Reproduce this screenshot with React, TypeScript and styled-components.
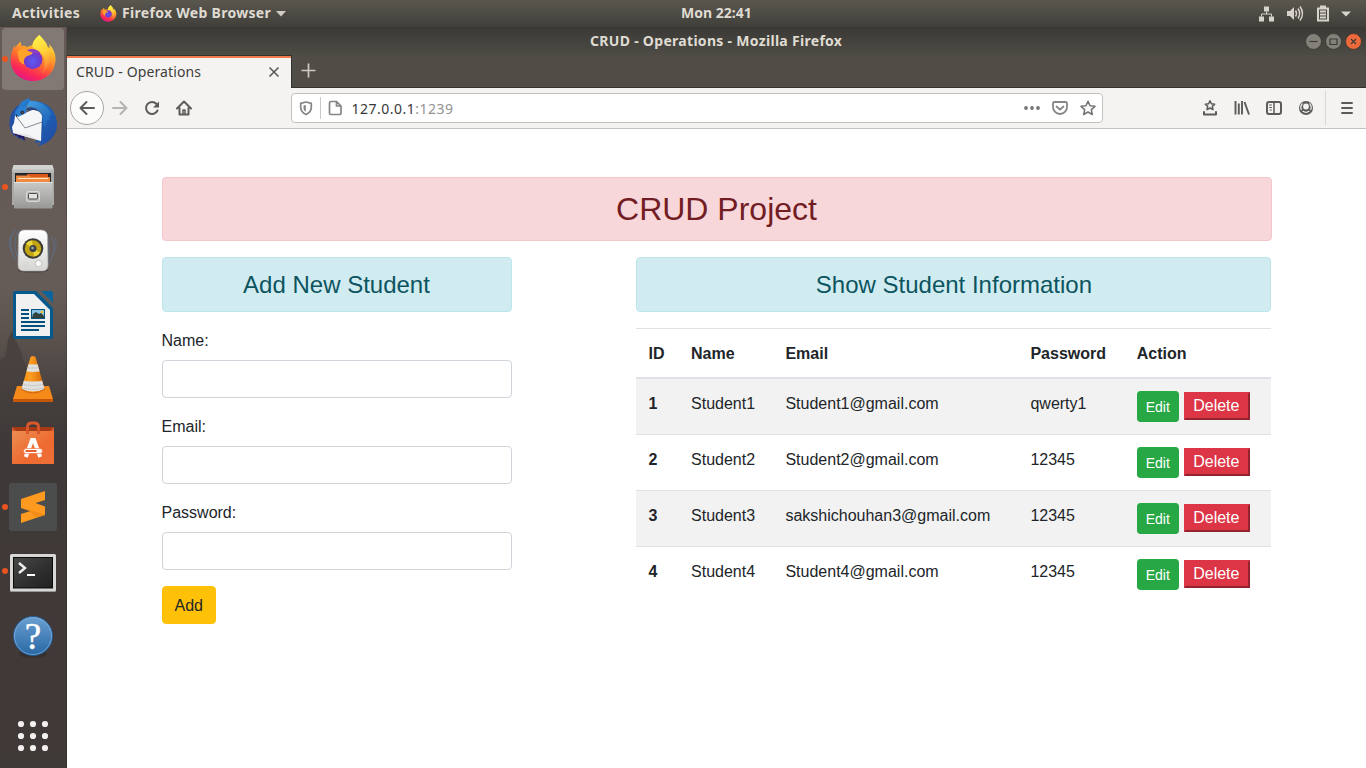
import React from "react";
import styled, { createGlobalStyle, css } from "styled-components";

const UI_FONT = '"Noto Sans", "Open Sans", sans-serif';

const GlobalStyle = createGlobalStyle`
  *, *::before, *::after { box-sizing: border-box; }
  html, body { margin: 0; padding: 0; overflow: hidden; background: #fff; }
  body { font-family: "Liberation Sans", Arial, sans-serif; font-size: 16px; line-height: 1.5; color: #212529; }
  svg { display: block; }
`;

const Desktop = styled.div`
  width: 1366px;
  height: 768px;
  display: flex;
  flex-direction: column;
  overflow: hidden;
`;

/* ---------- system panel ---------- */

const Panel = styled.header`
  height: 27px;
  flex: none;
  display: grid;
  grid-template-columns: 669px 72px 1fr;
  align-items: center;
  padding: 0 14px 0 12px;
  background: linear-gradient(#5a574f, #403f3a);
  color: #dfdbd2;
  font: 700 14px/25px ${UI_FONT};
  white-space: nowrap;
`;

const PanelGroup = styled.div<{ $end?: boolean }>`
  display: flex;
  align-items: center;
  justify-content: ${(p) => (p.$end ? "flex-end" : "flex-start")};
`;

const PanelText = styled.span<{ $w: number; $ls?: number }>`
  width: ${(p) => p.$w}px;
  height: 27px;
  letter-spacing: ${(p) => p.$ls ?? 0}px;
`;

const FoxSlot = styled.span`
  margin: 0 5px 0 19px;
`;

/* ---------- dock ---------- */

const Workspace = styled.div`
  flex: 1;
  display: flex;
  min-height: 0;
`;

const Dock = styled.nav`
  width: 67px;
  flex: none;
  display: flex;
  flex-direction: column;
  position: relative;
  background: linear-gradient(#655a55 0, #665c57 260px, #5b524e 310px, #46403e 370px, #3e3938 420px, #403937 600px, #3f3937 100%);
  border-right: 1px solid rgba(40, 34, 32, 0.25);
`;

const Scenery = styled.svg`
  position: absolute;
  left: 0;
  top: 0;
`;

const DockItem = styled.div<{ $active?: boolean; $running?: boolean }>`
  position: relative;
  height: 64px;
  flex: none;
  ${(p) =>
    p.$active &&
    css`
      &::before {
        content: "";
        position: absolute;
        left: 2px;
        top: 1px;
        width: 62px;
        height: 62px;
        border-radius: 4px;
        background: rgba(255, 255, 255, 0.19);
      }
    `}
  ${(p) =>
    p.$running &&
    css`
      &::after {
        content: "";
        position: absolute;
        left: 2px;
        top: 29px;
        width: 6px;
        height: 6px;
        border-radius: 50%;
        background: #e95420;
      }
    `}
  svg { position: relative; }
`;

const DockEnd = styled.div`
  margin-top: auto;
  height: 64px;
  position: relative;
`;

/* ---------- browser window ---------- */

const Window = styled.main`
  flex: 1;
  display: flex;
  flex-direction: column;
  min-width: 0;
`;

const TitleBar = styled.div`
  height: 28px;
  display: grid;
  grid-template-columns: 523px 254px 1fr;
  align-items: center;
  padding: 0 4px 0 0;
  background: linear-gradient(#3a3935, #4e4b45);
  color: #dfdbd2;
  font: 700 14px/28px ${UI_FONT};
  white-space: nowrap;
`;

const WindowTitle = styled.span`
  grid-column: 2;
  letter-spacing: 0.3px;
`;

const WindowButtons = styled.div`
  display: flex;
  justify-content: flex-end;
  gap: 3px;
`;

const TabStrip = styled.div`
  height: 33px;
  display: flex;
  background: #504d46;
  border-bottom: 1px solid #33322e;
`;

const Tab = styled.div`
  width: 225px;
  height: 33px;
  flex: none;
  display: flex;
  align-items: center;
  justify-content: space-between;
  padding: 0 11px 0 9px;
  border-top: 1px solid #33322e;
  border-right: 1px solid #33322e;
  background: #f4f3f2;
  box-shadow: inset 0 2px #f37b4c;
  color: #3e3e3c;
  font: 400 14px/32px ${UI_FONT};
  letter-spacing: 0.12px;
`;

const NewTab = styled.div`
  padding: 8px 0 0 9px;
`;

const NavBar = styled.div`
  height: 41px;
  display: flex;
  align-items: center;
  background: #f4f3f2;
  border-bottom: 1px solid #c6c2be;
  padding: 0 11px 0 3px;
`;

const BackButton = styled.div`
  width: 34px;
  height: 34px;
  border: 1px solid #aaa7a3;
  border-radius: 50%;
  background: #fcfcfb;
  padding: 8px;
`;

const NavIcons = styled.div`
  display: flex;
  gap: 16px;
  margin-left: 8px;
`;

const UrlBar = styled.div`
  width: 812px;
  height: 30px;
  margin-left: 99px;
  display: flex;
  align-items: center;
  border: 1px solid #c5c2be;
  border-radius: 4px;
  background: #fff;
  padding: 0 6px;
`;

const UrlDivider = styled.i`
  width: 1px;
  height: 22px;
  background: #cbc9c7;
  margin: 0 6px;
`;

const UrlText = styled.div`
  flex: 1;
  margin-left: 8.5px;
  padding-top: 1px;
  font: 400 14px/27px ${UI_FONT};
  letter-spacing: 0.5px;
  color: #383838;
  span { color: #929292; }
`;

const UrlActions = styled.div`
  display: flex;
  gap: 12px;
`;

const ToolIcons = styled.div`
  display: flex;
  gap: 16px;
  margin-left: auto;
`;

const MenuSlot = styled.div`
  margin-left: 11px;
  padding: 9px 0 9px 13px;
  border-left: 1px solid #d9d7d5;
`;

/* ---------- web page ---------- */

const Page = styled.section`
  flex: 1;
  background: #fff;
  padding-top: 48px;
`;

const Container = styled.div`
  width: 1110px;
  margin: 0 auto;
`;

const tones = {
  danger: ["#f8d7da", "#f5c6cb", "#721c24"],
  info: ["#d1ecf1", "#bee5eb", "#0c5460"],
};

const Alert = styled.h2<{ $tone: keyof typeof tones; $size: number }>`
  margin: 0 0 16px;
  padding: ${(p) => (p.$tone === "info" ? "12.8px 20px 11.2px" : "12px 20px")};
  text-align: center;
  font-weight: 500;
  font-size: ${(p) => p.$size}px;
  line-height: 1.2;
  background: ${(p) => tones[p.$tone][0]};
  border: 1px solid ${(p) => tones[p.$tone][1]};
  color: ${(p) => tones[p.$tone][2]};
  border-radius: 4px;
`;

const Columns = styled.div`
  display: grid;
  grid-template-columns: 350px 635px;
  column-gap: 124.95px;
`;

const Field = styled.div`
  margin-bottom: 16px;
`;

const Label = styled.label`
  display: block;
  padding-top: 1px;
  margin-bottom: 7px;
`;

const Input = styled.input`
  display: block;
  width: 100%;
  height: 38px;
  padding: 6px 12px;
  border: 1px solid #ced4da;
  border-radius: 4px;
  background: #fff;
`;

const AddButton = styled.button`
  font: 400 16px/24px "Liberation Sans", Arial, sans-serif;
  padding: 7px 12px 5px;
  border: 1px solid #ffc107;
  border-radius: 4px;
  background: #ffc107;
  color: #212529;
`;

const Table = styled.table`
  width: 100%;
  table-layout: fixed;
  border-collapse: collapse;
  th, td {
    padding: 13px 12px 11px;
    text-align: left;
    vertical-align: top;
    border-top: 1px solid #dee2e6;
  }
  thead th { border-bottom: 2px solid #dee2e6; }
  tbody tr:nth-of-type(odd) { background: rgba(0, 0, 0, 0.05); }
  tbody td:last-child { padding: 12px; }
`;

const Column = styled.col<{ $w: number }>`
  width: ${(p) => p.$w}px;
`;

const ActionCell = styled.td`
  white-space: nowrap;
  line-height: 24px;
`;

const EditButton = styled.button`
  font: 400 14px/21px "Liberation Sans", Arial, sans-serif;
  width: 42px;
  padding: 5px 0 3px;
  text-align: center;
  border: 1px solid #28a745;
  border-radius: 3.2px;
  background: #28a745;
  color: #fff;
`;

const DeleteButton = styled.button`
  font: 400 16px/24px "Liberation Sans", Arial, sans-serif;
  width: 66px;
  height: 28px;
  padding: 0 8px 0 7px;
  border: 2px solid;
  border-color: #dc3545 #93232e #93232e #dc3545;
  border-radius: 0;
  background: #dc3545;
  color: #fff;
`;

const ActionRow = styled.div`
  display: flex;
  align-items: flex-start;
  gap: 5px;
  height: 31px;
  ${DeleteButton} { margin-top: 1px; }
`;

/* ---------- icons ---------- */

const FirefoxArt = ({ id }: { id: string }) => (
  <>
    <defs>
      <linearGradient id={id + "a"} x1=".75" y1="0" x2=".3" y2="1">
        <stop offset="0" stopColor="#fff44f" />
        <stop offset=".3" stopColor="#ffb42a" />
        <stop offset=".58" stopColor="#ff6a2d" />
        <stop offset=".8" stopColor="#fb2a55" />
        <stop offset="1" stopColor="#e31587" />
      </linearGradient>
      <radialGradient id={id + "b"} cx=".5" cy=".6" r=".6">
        <stop offset="0" stopColor="#5b5bf5" />
        <stop offset=".6" stopColor="#6b3fd3" />
        <stop offset="1" stopColor="#8d31b5" />
      </radialGradient>
      <linearGradient id={id + "c"} x1=".3" y1="0" x2=".5" y2="1">
        <stop offset="0" stopColor="#fff34c" />
        <stop offset=".45" stopColor="#ffd338" />
        <stop offset=".8" stopColor="#ff9a35" />
        <stop offset="1" stopColor="#ff5a3a" />
      </linearGradient>
    </defs>
    <path fill={`url(#${id}a)`} d="M39.500 35c3 4 7 7 8 12l2 1c0-1 0-3-.5-4 5 5 7 11 6.500 17C54.500 73 45 81 33 81 20 81 11 72 10.700 60c-.2-6 1.800-11 4.300-15l.4 3c1.300-3 3.600-5 5.600-6.500-.2 2 .3 3.500.7 4.500 2-.4 4 .2 5.600 1.200 1.500-1 3-1.700 5-2 .700-4 4.200-8 7.200-10.200z" />
    <path fill={`url(#${id}c)`} d="M39.500 35c3 4 7 7 8.400 12.500C53 57 50 69 41 74c4-5 5-13 1.500-19-3-4-7-4-10-8.500 0-5 4-9.500 7-11.500z" />
    <circle cx="32.800" cy="59.500" r="9.700" fill={`url(#${id}b)`} />
    <path fill="#8a3cc4" d="M24.500 52c4-4 12-4 16 1-3-.5-4 .5-6 1z" />
    <path fill="#ffa42b" d="M17.500 52c2-3 5-3.500 8-2.500 3 1.500 5 2.500 7 3-.5 3-4 2.500-6 4-3 2-3 5-2 8-4-1-6-4-6-8z" />
  </>
);

const ThunderbirdArt = () => (
  <>
    <defs>
      <linearGradient id="tb" x1="0" y1="0" x2="1" y2="1">
        <stop offset="0" stopColor="#2a86d8" /><stop offset=".5" stopColor="#1b62b6" /><stop offset="1" stopColor="#22489f" />
      </linearGradient>
      <linearGradient id="tw" x1="0" y1="0" x2="1" y2="1">
        <stop offset="0" stopColor="#4cb0f0" /><stop offset="1" stopColor="#1c5fb4" />
      </linearGradient>
    </defs>
    <path fill="#2450a6" d="M19 105c-8 5-11 14-9 23 1 3 2 6 4 8l1-2 3 5 1-2 5 4-2-9-6-15z" />
    <path fill="#22165c" d="m12 131 4 5 1-1 3 4 1-2 4 4-1-6-9-6z" />
    <path fill="url(#tb)" d="M19 106c1-3 3-5 6-6l4-2 2 3c14-1 25 8 26 22 1 10-7 21-19 23l3-4-7 1 7-8 2-25-16-5-12 12c-1-4 1-8 4-11z" />
    <path fill="#163f91" d="M26 109c8-4 15-1 18 5l-3 24-1-22z" opacity=".75" />
    <path fill="url(#tw)" d="M30 101c11 0 19 6 22 14l-3 1 1 4-3 0 0 5-4 1-1-11c-4-7-10-9-17-7z" opacity=".75" />
    <path fill="#f5f6f8" d="m15 116 8-2 9-4c5 0 9 2 10 6l-1 25-14-4-14-4-1-6 2-4z" />
    <path fill="#dfe2e8" d="m13 133 14 1 14 7-14-4z" opacity=".7" />
    <path d="m16 116 9 12 17-6" fill="none" stroke="#858b95" strokeWidth="1" />
    <path fill="#2c7fd0" d="M16 114c2-6 6-8 11-8l-1 7-8 4z" />
    <circle cx="22.300" cy="112.500" r="1.500" fill="#5d4a30" stroke="#141f45" strokeWidth=".7" />
    <path fill="#262f3c" d="m16 114 2 2-2 1z" />
  </>
);

const FilesArt = () => (
  <>
    <defs>
      <linearGradient id="fl" x1="0" y1="0" x2="0" y2="1"><stop offset="0" stopColor="#c9c9c8" /><stop offset="1" stopColor="#989896" /></linearGradient>
    </defs>
    <path fill="#a9a9a7" d="M12 170h42v35H12z" />
    <path fill="#d2d2d0" d="M13.500 165h39l1.500 5H12z" />
    <path fill="#bcbcba" d="M12 169.500h42v3H12z" />
    <path fill="#262626" d="M15 173h36v10H15z" />
    <path fill="#d9591d" d="M27 174h21v8H27z" />
    <path fill="#ef8a41" d="M16 175.500h13l2 1.500h19v5H16z" />
    <path fill="#ffe3c0" d="M18 178h30v1H18z" />
    <rect x="14" y="182" width="38.500" height="26.500" rx="1" fill="url(#fl)" />
    <path d="M14 182.500h38.500" stroke="#e3e3e2" />
    <rect x="26.500" y="191.500" width="13" height="10" rx="1.500" fill="#b9b9b7" stroke="#d9d9d8" />
    <rect x="28.500" y="193.500" width="9" height="5.500" rx="1" fill="#e2e2e0" stroke="#4a4a48" />
  </>
);

const RhythmboxArt = () => (
  <>
    <defs>
      <linearGradient id="rb" x1="0" y1="0" x2="0" y2="1"><stop offset="0" stopColor="#fff" /><stop offset="1" stopColor="#d5d6d3" /></linearGradient>
    </defs>
    <g fill="none" stroke="#5a7398" strokeWidth="1.300" opacity=".5">
      <path d="M15 230c-6 8-6 20 1 30M19 230c-6 8-5 24 2 32M51 236c5 8 3 20-3 30M47 236c4 8 3 22-3 32M11 235c-3 6-2 12 1 18M55 238c2 5 1 11-2 17" />
    </g>
    <ellipse cx="33" cy="270.500" rx="15" ry="2" fill="#2c2725" opacity=".5" />
    <path fill="url(#rb)" stroke="#aaa" strokeWidth=".6" d="M24 230h17q6 0 6.500 6l.5 29q0 6-6 6H24q-6 0-6-6l.5-29q.5-6 5.500-6z" />
    <circle cx="33" cy="248.500" r="10.300" fill="#3c3c37" />
    <circle cx="33" cy="248.500" r="8.200" fill="#c3a412" />
    <path d="m33 248.500-7-5a8 8 0 0 1 6-3zM33 248.500l7 4a8 8 0 0 1-6 4z" fill="#ead63c" />
    <circle cx="33" cy="248.500" r="3.500" fill="#3d4145" />
    <circle cx="32.500" cy="248" r="1.300" fill="#a2a8ac" />
    <circle cx="38.500" cy="263.500" r="3.300" fill="#f8f8f8" stroke="#c2c2c0" />
    <rect x="24" y="262" width="4" height="4" rx="1" fill="none" stroke="#d4d4d2" />
  </>
);

const WriterArt = () => (
  <>
    <path fill="#045a8d" d="M15 291h21l17 17v29a2 2 0 0 1-2 2H15a2 2 0 0 1-2-2v-44a2 2 0 0 1 2-2z" />
    <path fill="#f0f0f0" d="M16 294h18l16 16v26H16z" />
    <path fill="#0c649b" d="M41 291h10a2 2 0 0 1 2 2v10z" />
    <path d="M21 310h8M21 314h8M21 318h8M21 322h24M21 326h24M21 330h18" stroke="#02517e" strokeWidth="2" />
    <path fill="#02517e" d="M31 309h14v10H31z" />
    <path fill="#83c4e6" d="M32 310h12v8H32z" />
    <circle cx="42" cy="312" r="1.500" fill="#f3c535" />
    <path fill="#31413c" d="m32 318 1-4 3-2 3 2 2-1 3 3v2z" />
  </>
);

const VlcArt = () => (
  <>
    <defs>
      <linearGradient id="vl" x1="0" y1="0" x2="1" y2="0"><stop offset="0" stopColor="#f28a10" /><stop offset=".4" stopColor="#ff9f22" /><stop offset="1" stopColor="#c75500" /></linearGradient>
      <clipPath id="vc"><path d="M30.500 357q2.500-2 5 0l9 32q-11.500 6-23 0z" /></clipPath>
    </defs>
    <path fill="#f58a1b" d="M17 386h32l4 13H13z" />
    <path fill="#c55706" d="M13 399h40v3H13z" />
    <g clipPath="url(#vc)">
      <path fill="url(#vl)" d="M18 355h30v40H18z" />
      <path fill="#e0e0de" d="M20 363q13 3 26 0v7q-13 4-26 0zM18 379.500q15 4 30 0v9q-15 6-30 0z" />
      <path d="M20 366q13 4 26 0M18 383q15 5 30 0M18 387q15 5 30 0" fill="none" stroke="#b0b0ae" strokeDasharray="1 1" />
    </g>
    <path d="M21 389q12 8 24 0" fill="none" stroke="#ce6410" />
  </>
);

const SoftwareArt = () => (
  <>
    <defs>
      <linearGradient id="sw" x1="0" y1="0" x2="1" y2="1"><stop offset="0" stopColor="#ec8d52" /><stop offset=".6" stopColor="#ee6a30" /><stop offset="1" stopColor="#ee7038" /></linearGradient>
    </defs>
    <path fill="#a63a14" d="M12 427h42v6H12z" />
    <path fill="#d4592d" d="M12 427l4 4h34l4-4v5H12z" />
    <path fill="url(#sw)" d="M12 431h42v33H12z" />
    <path d="M27.500 434v-7q0-4 4-4h3q4 0 4 4v7" fill="none" stroke="#d9572a" strokeWidth="2.800" />
    <path d="m25.800 457 6.200-17h2l6.200 17" fill="none" stroke="#fff" strokeWidth="4" />
    <rect x="23.500" y="448.500" width="19" height="5" rx="2.500" fill="#fff" stroke="#ec6b34" strokeWidth=".6" />
    <path d="M25.500 451h11" stroke="#e5602d" strokeWidth="2" />
  </>
);

const SublimeArt = () => (
  <>
    <rect x="9" y="483" width="48" height="48" rx="3" fill="#4b4c4c" />
    <path fill="#ff9a20" d="m21 499 24-8v9l-9.500 3 9.500 3.500v8.500l-24 8v-9l9.500-3-9.500-3z" />
    <path fill="#e98612" d="m21 508 24 6.500v.5l-9 3-6-6.500z" opacity=".6" />
  </>
);

const TerminalArt = () => (
  <>
    <defs>
      <linearGradient id="tm" x1="0" y1="0" x2="1" y2="1"><stop offset="0" stopColor="#484847" /><stop offset=".55" stopColor="#303030" /><stop offset="1" stopColor="#202020" /></linearGradient>
    </defs>
    <rect x="10" y="554" width="46" height="37.500" rx="1.500" fill="#d7d8d5" />
    <path d="M10.500 591.500h45" stroke="#989996" />
    <rect x="13.500" y="557.500" width="39" height="30.500" fill="url(#tm)" stroke="#0b0b0b" />
    <path d="m19 563 6 5-6 5" fill="none" stroke="#eee" strokeWidth="2.400" />
    <path d="M27 575h8" stroke="#fff" strokeWidth="2" />
  </>
);

const HelpGlyph = styled.text`
  font: 400 37px "Liberation Serif", serif;
  fill: #fff;
  stroke: #fff;
  stroke-width: 0.4px;
`;

const HelpArt = () => (
  <>
    <defs>
      <linearGradient id="hp" x1="0" y1="0" x2="0" y2="1"><stop offset="0" stopColor="#6ba0d1" /><stop offset="1" stopColor="#2867a5" /></linearGradient>
    </defs>
    <ellipse cx="33" cy="654" rx="14" ry="4" fill="#201c1b" opacity=".3" />
    <circle cx="33" cy="636" r="19.500" fill="url(#hp)" stroke="#225b94" />
    <circle cx="33" cy="636" r="18.500" fill="none" stroke="#86b2dc" strokeWidth=".7" />
    <HelpGlyph x="33" y="649" textAnchor="middle">?</HelpGlyph>
  </>
);

const dockApps = [
  { art: <FirefoxArt id="fd" />, running: true, active: true },
  { art: <ThunderbirdArt /> },
  { art: <FilesArt />, running: true },
  { art: <RhythmboxArt /> },
  { art: <WriterArt /> },
  { art: <VlcArt /> },
  { art: <SoftwareArt /> },
  { art: <SublimeArt />, running: true },
  { art: <TerminalArt />, running: true },
  { art: <HelpArt /> },
];

const LineIcon = ({ children, color = "#5b5b59", size = 16 }: { children: React.ReactNode; color?: string; size?: number }) => (
  <svg width={size} height={size} viewBox="0 0 16 16" fill="none" stroke={color} strokeWidth="2" strokeLinecap="round" strokeLinejoin="round">
    {children}
  </svg>
);

const students = [
  ["1", "Student1", "Student1@gmail.com", "qwerty1"],
  ["2", "Student2", "Student2@gmail.com", "12345"],
  ["3", "Student3", "sakshichouhan3@gmail.com", "12345"],
  ["4", "Student4", "Student4@gmail.com", "12345"],
];

const columns: [string, number][] = [["ID", 42.6], ["Name", 94.4], ["Email", 245], ["Password", 106.4], ["Action", 146.6]];

const SystemPanel = () => (
  <Panel>
    <PanelGroup>
      <PanelText $w={69} $ls={0.3}>Activities</PanelText>
      <FoxSlot><svg width="17" height="17" viewBox="10 34 47 48"><FirefoxArt id="fp" /></svg></FoxSlot>
      <PanelText $w={150} $ls={0.3}>Firefox Web Browser</PanelText>
      <svg width="14" height="6" viewBox="0 0 14 6"><path d="M4 0h10L9 5.500z" fill="#d2cec6" /></svg>
    </PanelGroup>
    <PanelText $w={72} $ls={0}>Mon 22:41</PanelText>
    <PanelGroup $end>
      <svg width="94" height="20" viewBox="1258 3.500 94 20" fill="#d6d3cc">
        <path d="M1264 6h5v5h-5zM1259 16h5v5h-5zM1269 16h5v5h-5z" />
        <path d="M1266.500 11v2.500M1261.500 16v-2.500h10v2.500" stroke="#d6d3cc" fill="none" />
        <path d="M1287 10.500h3l4-4v13l-4-4h-3z" />
        <path d="M1295.500 10q2 3 0 6M1298 8q3.300 5 0 10M1300 6q5 7 0 14" stroke="#d6d3cc" strokeWidth="1.500" fill="none" />
        <path fillRule="evenodd" d="M1320 5h6v2h3v14h-12V7h3zM1319 9v10h8V9z" />
        <path d="M1320 10h6v2h-6zM1320 13h6v2h-6zM1320 16h6v2h-6z" />
        <path d="M1341 11h10l-5 5z" />
      </svg>
    </PanelGroup>
  </Panel>
);

const AppDock = () => (
  <Dock>
    <Scenery width="66" height="741" viewBox="0 27 66 741">
      <defs><linearGradient id="sc" x1="0" y1="0" x2="0" y2="1"><stop offset="0" stopColor="#413b38" stopOpacity=".75" /><stop offset="1" stopColor="#3d3837" stopOpacity="0" /></linearGradient></defs>
      <path fill="url(#sc)" d="m0 360 5-3 3-18 4-8 4 10 4 8 6 18 7 22 20 8 13-8v60H0z" />
    </Scenery>
    {dockApps.map((app, i) => (
      <DockItem key={i} $active={app.active} $running={app.running}>
        <svg width="66" height="64" viewBox={`0 ${27 + i * 64} 66 64`}>{app.art}</svg>
      </DockItem>
    ))}
    <DockEnd>
      <svg width="66" height="64" viewBox="0 704 66 64" fill="#f2f1ef">
        {[724, 736, 748].map((y) => [21, 33, 45].map((x) => <circle key={`${x}-${y}`} cx={x} cy={y} r="3.100" />))}
      </svg>
    </DockEnd>
  </Dock>
);

const BrowserChrome = () => (
  <>
    <TitleBar>
      <WindowTitle>CRUD - Operations - Mozilla Firefox</WindowTitle>
      <WindowButtons>
        {["M4.500 8.500h8", "M5 6h7v5.500H5z", "m6 6 5 5m0-5-5 5"].map((d, i) => (
          <svg key={d} width="17" height="17" viewBox="0 0 17 17">
            <circle cx="8.500" cy="8.500" r="7.900" fill={i === 2 ? "#ee6a3c" : "#84817a"} stroke="#33322e" strokeWidth=".7" />
            <path d={d} fill="none" stroke="#3c3b37" strokeWidth="1.200" />
          </svg>
        ))}
      </WindowButtons>
    </TitleBar>
    <TabStrip>
      <Tab>
        CRUD - Operations
        <svg width="12" height="12" viewBox="0 0 12 12"><path d="m1.500 1.500 9 9m0-9-9 9" stroke="#5b5b59" strokeWidth="1.600" /></svg>
      </Tab>
      <NewTab>
        <svg width="15" height="15" viewBox="0 0 15 15"><path d="M7.500 .5v14M.5 7.500h14" stroke="#cdcac3" strokeWidth="1.700" /></svg>
      </NewTab>
    </TabStrip>
    <NavBar>
      <BackButton><LineIcon><path d="M15 8H1.500M7.500 2l-6 6 6 6" /></LineIcon></BackButton>
      <NavIcons>
        <LineIcon color="#b5b4b2"><path d="M1 8h13.500M8.500 2l6 6-6 6" /></LineIcon>
        <LineIcon><path d="M12.500 4A6 6 0 1 0 13.500 10.500" /><path d="M15 1.500V7.500H9z" fill="#5b5b59" stroke="none" /></LineIcon>
        <LineIcon><path d="M1 8.500l7-7 7 7M3.500 8v6.500h9V8" /><path d="M7 14v-4h2v4" strokeWidth="1.500" /></LineIcon>
      </NavIcons>
      <UrlBar>
        <LineIcon color="#858583"><path d="M8 2 2.700 3.300V7c0 4 2 6 5.300 7.500C11.300 13 13.300 11 13.300 7V3.300z" strokeWidth="1.700" /><path d="M7.800 5 5.500 5.600V8c0 1.800.8 2.800 2.300 3.800z" fill="#858583" stroke="none" /></LineIcon>
        <UrlDivider />
        <LineIcon color="#858583"><path d="M4 1.500h5.500l4.500 4.500v7a1.500 1.500 0 0 1-1.500 1.500h-8.500A1.500 1.500 0 0 1 2.500 13V3A1.500 1.500 0 0 1 4 1.500zM9.500 1.500V6H14" strokeWidth="1.700" /></LineIcon>
        <UrlText>127.0.0.1<span>:1239</span></UrlText>
        <UrlActions>
          <LineIcon color="#747472"><g fill="#747472" stroke="none"><circle cx="2" cy="8" r="1.900" /><circle cx="8" cy="8" r="1.900" /><circle cx="14" cy="8" r="1.900" /></g></LineIcon>
          <LineIcon color="#858583"><path d="M2.500 2h11a1.500 1.500 0 0 1 1.500 1.500V7a7 7 0 0 1-14 0V3.500A1.500 1.500 0 0 1 2.500 2zM4.500 6.500 8 9.700l3.500-3.200" strokeWidth="1.800" /></LineIcon>
          <LineIcon color="#747472"><path d="m8 1.300 2 4.500 5 .5-3.700 3.300 1 4.900L8 12l-4.300 2.500 1-4.900L1 6.300l5-.5z" strokeWidth="1.600" /></LineIcon>
        </UrlActions>
      </UrlBar>
      <ToolIcons>
        <LineIcon><path d="m8 .8 1.400 3 3.300.4-2.400 2.200.7 3.200L8 8l-3 1.600.7-3.200-2.400-2.200 3.300-.4z" strokeWidth="1.500" /><path d="M2 12v2.500h12V12" /></LineIcon>
        <LineIcon><path d="M1.500 1v13.500M4.800 3.500v11M8 1v13.500M10.500 2l4.500 12.500" strokeWidth="1.900" strokeLinecap="butt" /></LineIcon>
        <LineIcon><rect x="1" y="2" width="14" height="12" rx="2" /><path d="M8 2v12" strokeWidth="1.500" /><path d="M3.500 5h2M3.500 7.500h2M4 10h1.500" strokeWidth="1" /></LineIcon>
        <LineIcon><circle cx="8" cy="8" r="7" fill="#5b5b59" stroke="none" /><circle cx="8" cy="6.500" r="2.900" fill="#f4f3f2" stroke="none" /><path d="M4.200 3.800A5.300 5.300 0 0 0 3.300 9.500M11.800 3.800a5.300 5.300 0 0 1 .9 5.700M5 11.300q3 2 6 0" stroke="#f4f3f2" strokeWidth="1.200" /></LineIcon>
      </ToolIcons>
      <MenuSlot><LineIcon><path d="M3 3h10M3 8h10M3 13h10" strokeWidth="1.900" /></LineIcon></MenuSlot>
    </NavBar>
  </>
);

const StudentsPage = () => (
  <Page>
    <Container>
      <Alert $tone="danger" $size={32}>CRUD Project</Alert>
      <Columns>
        <div>
          <Alert as="h4" $tone="info" $size={24}>Add New Student</Alert>
          {["Name:", "Email:", "Password:"].map((name) => (
            <Field key={name}>
              <Label htmlFor={name}>{name}</Label>
              <Input id={name} />
            </Field>
          ))}
          <AddButton>Add</AddButton>
        </div>
        <div>
          <Alert as="h4" $tone="info" $size={24}>Show Student Information</Alert>
          <Table>
            <colgroup>{columns.map(([n, w]) => <Column key={n} $w={w} />)}</colgroup>
            <thead><tr>{columns.map(([n]) => <th key={n}>{n}</th>)}</tr></thead>
            <tbody>
              {students.map(([id, name, email, password]) => (
                <tr key={id}>
                  <th>{id}</th>
                  <td>{name}</td>
                  <td>{email}</td>
                  <td>{password}</td>
                  <ActionCell><ActionRow><EditButton>Edit</EditButton><DeleteButton>Delete</DeleteButton></ActionRow></ActionCell>
                </tr>
              ))}
            </tbody>
          </Table>
        </div>
      </Columns>
    </Container>
  </Page>
);

export default function App() {
  return (
    <Desktop>
      <GlobalStyle />
      <SystemPanel />
      <Workspace>
        <AppDock />
        <Window>
          <BrowserChrome />
          <StudentsPage />
        </Window>
      </Workspace>
    </Desktop>
  );
}
